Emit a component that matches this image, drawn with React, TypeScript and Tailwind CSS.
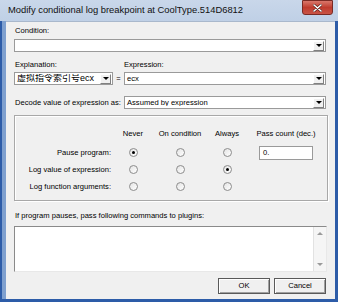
import React from 'react';

const font = { fontFamily: '"Liberation Sans", "Noto Sans CJK SC", Arial, sans-serif' };

const Arrow: React.FC = () => (
  <div className="w-0 h-0 border-x-[3px] border-x-transparent border-t-[3px] border-t-black" />
);

const DropButton: React.FC = () => (
  <div className="w-[11px] h-[10px] mr-px flex items-center justify-center bg-[#f0f0f0] border border-t-white border-l-white border-b-[#808080] border-r-[#808080]">
    <Arrow />
  </div>
);

const Combo: React.FC<{ className?: string; text?: string }> = ({ className = '', text = '' }) => (
  <div className={`h-[13px] flex items-center bg-white border border-[#9a9a9a] ${className}`}>
    <span className="flex-1 pl-[2px] leading-none whitespace-nowrap overflow-hidden">{text}</span>
    <DropButton />
  </div>
);

const Radio: React.FC<{ checked?: boolean }> = ({ checked }) => (
  <div className="w-[9px] h-[9px] rounded-full border border-[#8c8c8c] bg-gradient-to-br from-[#e4e4e4] to-white flex items-center justify-center">
    {checked && <div className="w-[3px] h-[3px] rounded-full bg-black" />}
  </div>
);

const Row: React.FC<{ label: string; checked: number; pass?: boolean }> = ({ label, checked, pass }) => (
  <div className="h-[17px] grid grid-cols-[96px_44px_50px_44px_74px] items-center">
    <span className="text-right whitespace-nowrap">{label}</span>
    {[0, 1, 2].map((i) => (
      <div key={i} className="flex justify-center">
        <Radio checked={checked === i} />
      </div>
    ))}
    <div className="flex justify-center">
      {pass && (
        <div className="w-[54px] h-[14px] bg-white border border-[#9a9a9a] flex items-center pl-[3px]">0.</div>
      )}
    </div>
  </div>
);

const Button: React.FC<{ label: string }> = ({ label }) => (
  <div className="w-[52px] h-[16px] border border-[#5a5a5a] bg-[#f0f0f0] flex items-center justify-center shadow-[inset_1px_1px_0_#fff,inset_-1px_-1px_0_#a0a0a0]">
    {label}
  </div>
);

export default function App() {
  return (
    <div className="w-[342px] h-[305px] bg-white text-[7.6px] text-black" style={font}>
      <div className="w-[338px] h-[302px] flex flex-col bg-[#2d5ca8] pb-[3px]">
        {/* title bar */}
        <div className="h-[21px] flex items-start bg-gradient-to-b from-[#c9d7ea] to-[#bfd0e6] relative">
          <span className="pl-[8px] pt-[5px] text-[9.4px] leading-none text-[#111]">
            Modify conditional log breakpoint at CoolType.514D6812
          </span>
          <div className="absolute left-[302px] top-0 w-[31px] h-[15px] rounded-b-[3px] border border-[#7a2a24] bg-gradient-to-b from-[#d9766b] via-[#bf3b2e] to-[#c95446] flex items-center justify-center">
            <svg width="9" height="8" viewBox="0 0 9 8">
              <path d="M1 1 L8 7 M8 1 L1 7" stroke="#4a1a16" strokeWidth="2.6" strokeLinecap="round" />
              <path d="M1 1 L8 7 M8 1 L1 7" stroke="#fff" strokeWidth="1.6" strokeLinecap="round" />
            </svg>
          </div>
        </div>

        <div className="flex-1 flex bg-[#c4d3e7]">
          <div className="w-[2px] bg-[#2d5ca8]" />
          <div className="w-[4px] bg-[#7fa0cf]" />
          {/* client area */}
          <div className="w-[329px] flex flex-col bg-[#f0f0f0] pl-[8px] pr-[9px] border-t border-[#a9b8cc]">
            <div className="h-[17px] pt-[5px] leading-none pl-px">Condition:</div>
            <Combo className="w-[312px]" />

            <div className="flex mt-[7px] h-[12px] leading-none items-center">
              <span className="w-[110px] pl-px">Explanation:</span>
              <span>Expression:</span>
            </div>
            <div className="flex items-center mt-[1px]">
              <Combo className="w-[99px] text-[9px]" text="虚拟指令索引号ecx" />
              <span className="w-[11px] text-center">=</span>
              <Combo className="w-[202px]" text="ecx" />
            </div>

            <div className="flex items-center mt-[11px]">
              <span className="w-[110px] pl-px whitespace-nowrap">Decode value of expression as:</span>
              <Combo className="w-[202px]" text="Assumed by expression" />
            </div>

            {/* group box */}
            <div className="mt-[6px] w-[314px] h-[86px] border border-[#a8a8a8] shadow-[1px_1px_0_#fff,inset_1px_1px_0_#fff] pt-[11px]">
              <div className="h-[14px] grid grid-cols-[96px_44px_50px_44px_74px] items-center">
                <span />
                <span className="text-center">Never</span>
                <span className="text-center whitespace-nowrap">On condition</span>
                <span className="text-center">Always</span>
                <span className="text-center whitespace-nowrap">Pass count (dec.)</span>
              </div>
              <div className="mt-[3px]">
                <Row label="Pause program:" checked={0} pass />
                <Row label="Log value of expression:" checked={2} />
                <Row label="Log function arguments:" checked={-1} />
              </div>
            </div>

            <div className="mt-[9px] h-[12px] leading-none pl-px flex items-center">
              If program pauses, pass following commands to plugins:
            </div>
            <div className="mt-[4px] w-[313px] h-[46px] bg-white border border-t-[#8a8a8a] border-l-[#8a8a8a] border-b-[#e8e8e8] border-r-[#e8e8e8] flex justify-end">
              <div className="w-[13px] h-full bg-[#f5f5f5] border-l border-[#e2e2e2] flex flex-col items-center justify-between py-[5px]">
                <div className="w-0 h-0 border-x-[3px] border-x-transparent border-b-[3px] border-b-[#9a9a9a]" />
                <div className="w-0 h-0 border-x-[3px] border-x-transparent border-t-[3px] border-t-[#9a9a9a]" />
              </div>
            </div>

            <div className="flex justify-end gap-[4px] mt-[6px]">
              <Button label="OK" />
              <Button label="Cancel" />
            </div>
          </div>
          <div className="w-[3px] bg-[#2d5ca8]" />
        </div>
      </div>
    </div>
  );
}
